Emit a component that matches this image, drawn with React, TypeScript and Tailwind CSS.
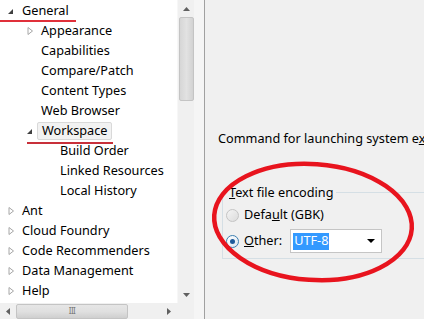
import React from 'react';

type Node = { label: string; level: number; arrow: 'open' | 'closed' | 'none'; selected?: boolean };

const tree: Node[] = [
  { label: 'General', level: 0, arrow: 'open' },
  { label: 'Appearance', level: 1, arrow: 'closed' },
  { label: 'Capabilities', level: 1, arrow: 'none' },
  { label: 'Compare/Patch', level: 1, arrow: 'none' },
  { label: 'Content Types', level: 1, arrow: 'none' },
  { label: 'Web Browser', level: 1, arrow: 'none' },
  { label: 'Workspace', level: 1, arrow: 'open', selected: true },
  { label: 'Build Order', level: 2, arrow: 'none' },
  { label: 'Linked Resources', level: 2, arrow: 'none' },
  { label: 'Local History', level: 2, arrow: 'none' },
  { label: 'Ant', level: 0, arrow: 'closed' },
  { label: 'Cloud Foundry', level: 0, arrow: 'closed' },
  { label: 'Code Recommenders', level: 0, arrow: 'closed' },
  { label: 'Data Management', level: 0, arrow: 'closed' },
  { label: 'Help', level: 0, arrow: 'closed' },
];

const indent = ['pl-[6px]', 'pl-[25px]', 'pl-[44px]'];

function Arrow({ kind }: { kind: Node['arrow'] }) {
  if (kind === 'open')
    return (
      <svg width="10" height="10" viewBox="0 0 10 10">
        <path d="M7 3 L7 8 L2 8 Z" fill="#404040" />
      </svg>
    );
  if (kind === 'closed')
    return (
      <svg width="10" height="10" viewBox="0 0 10 10">
        <path d="M3 1.5 L7.5 5 L3 8.5 Z" fill="none" stroke="#a6a6a6" strokeWidth="1" />
      </svg>
    );
  return <span className="w-[10px]" />;
}

function Tree() {
  return (
    <div className="w-[177px] shrink-0 h-[303px] pt-px bg-white overflow-hidden">
      {tree.map(n => (
        <div key={n.label} className={`h-[20px] flex items-center gap-[6px] whitespace-nowrap ${indent[n.level]}`}>
          <Arrow kind={n.arrow} />
          <span
            className={
              n.selected
                ? 'px-[4px] -ml-[4px] h-[18px] flex items-center bg-[#f2f2f2] border border-[#d9d9d9] rounded-[2px]'
                : ''
            }
          >
            {n.label}
          </span>
        </div>
      ))}
    </div>
  );
}

function VScroll() {
  return (
    <div className="w-[17px] shrink-0 h-[303px] bg-[#f0f0f0] flex flex-col items-center border-l border-[#f7f7f7]">
      <div className="h-[17px] flex items-center justify-center">
        <svg width="7" height="4" viewBox="0 0 7 4"><path d="M0 4 L3.5 0 L7 4 Z" fill="#606060" /></svg>
      </div>
      <div className="w-[15px] h-[84px] bg-gradient-to-r from-[#d6d6d6] via-[#e2e2e2] to-[#d2d2d2] border border-[#c4c4c4] rounded-[2px]" />
      <div className="flex-1" />
      <div className="h-[17px] flex items-center justify-center">
        <svg width="7" height="4" viewBox="0 0 7 4"><path d="M0 0 L3.5 4 L7 0 Z" fill="#606060" /></svg>
      </div>
    </div>
  );
}

function HScroll() {
  return (
    <div className="h-[16px] flex">
      <div className="w-[177px] shrink-0 bg-[#f0f0f0] flex items-center">
        <div className="w-[16px] flex justify-center">
          <svg width="4" height="7" viewBox="0 0 4 7"><path d="M4 0 L0 3.5 L4 7 Z" fill="#606060" /></svg>
        </div>
        <div className="w-[112px] h-[15px] bg-gradient-to-b from-[#e6e6e6] via-[#e0e0e0] to-[#cfcfcf] border border-[#c4c4c4] rounded-[2px] flex items-center justify-center">
          <span className="text-[8px] leading-none text-[#777] tracking-[-0.5px]">III</span>
        </div>
        <div className="flex-1" />
        <div className="w-[16px] flex justify-center">
          <svg width="4" height="7" viewBox="0 0 4 7"><path d="M0 0 L4 3.5 L0 7 Z" fill="#606060" /></svg>
        </div>
      </div>
      <div className="w-[17px] shrink-0 bg-[#f0f0f0]" />
    </div>
  );
}

function Radio({ checked }: { checked?: boolean }) {
  return (
    <span
      className={`w-[13px] h-[13px] shrink-0 rounded-full border flex items-center justify-center ${
        checked ? 'border-[#3c7fb1] bg-gradient-to-br from-[#ffffff] to-[#dce6f0]' : 'border-[#c4c4c4] bg-gradient-to-br from-[#f4f4f4] to-[#dcdcdc]'
      }`}
    >
      {checked && <span className="w-[5px] h-[5px] rounded-full bg-[#1e5a9a]" />}
    </span>
  );
}

export default function App() {
  return (
    <div
      className="relative w-[424px] h-[319px] flex overflow-hidden text-[12.7px] text-black bg-[#f0f0f0]"
      style={{ fontFamily: '"Noto Sans", "Open Sans", sans-serif' }}
    >
      <div className="w-[194px] shrink-0 flex flex-col">
        <div className="flex">
          <Tree />
          <VScroll />
        </div>
        <HScroll />
      </div>
      <div className="w-[10px] shrink-0 bg-[#f5f5f5]" />
      <div className="w-px shrink-0 bg-[#a0a0a0]" />
      <div className="flex-1 min-w-0 overflow-hidden flex flex-col pl-[13px] pt-[129px] whitespace-nowrap">
        <div className="h-[20px] flex items-center">
          <span>
            Command for launching system e<span className="underline">x</span>p
          </span>
        </div>
        <div className="mt-[43px] ml-[4px] h-[67px] w-[220px] shrink-0 border border-[#d5dfe5] relative">
          <span className="absolute -top-[10px] left-[4px] px-[2px] bg-[#f0f0f0] leading-[18px]">
            <span className="underline">T</span>ext file encoding
          </span>
          <div className="pt-[12px] pl-[3px] flex flex-col">
            <div className="h-[20px] flex items-center gap-[5px]">
              <Radio />
              <span>
                Defa<span className="underline">u</span>lt (GBK)
              </span>
            </div>
            <div className="mt-[4px] h-[24px] flex items-center gap-[5px]">
              <Radio checked />
              <span>
                <span className="underline">O</span>ther:
              </span>
              <div className="ml-[3px] w-[92px] h-[24px] bg-white border border-[#c5c5c5] flex items-center pl-[2px] pr-[6px]">
                <span className="bg-[#3399ff] text-white h-[17px] flex items-center px-[1px]">UTF-8</span>
                <div className="flex-1" />
                <svg width="8" height="4" viewBox="0 0 8 4"><path d="M0 0 L8 0 L4 4 Z" fill="#000" /></svg>
              </div>
            </div>
          </div>
        </div>
      </div>

      {/* annotations drawn over the screenshot */}
      <div className="absolute left-0 top-[20px] w-[76px] h-[1.5px] bg-[#e0303a]" />
      <div className="absolute left-[27px] top-[142px] w-[86px] h-[1.5px] bg-[#c8303a]" />
      <svg className="absolute left-0 top-0 pointer-events-none" width="424" height="319">
        <ellipse cx="313" cy="222" rx="99" ry="58" fill="none" stroke="#e8141e" strokeWidth="4.5" transform="rotate(4 313 222)" />
      </svg>
    </div>
  );
}
